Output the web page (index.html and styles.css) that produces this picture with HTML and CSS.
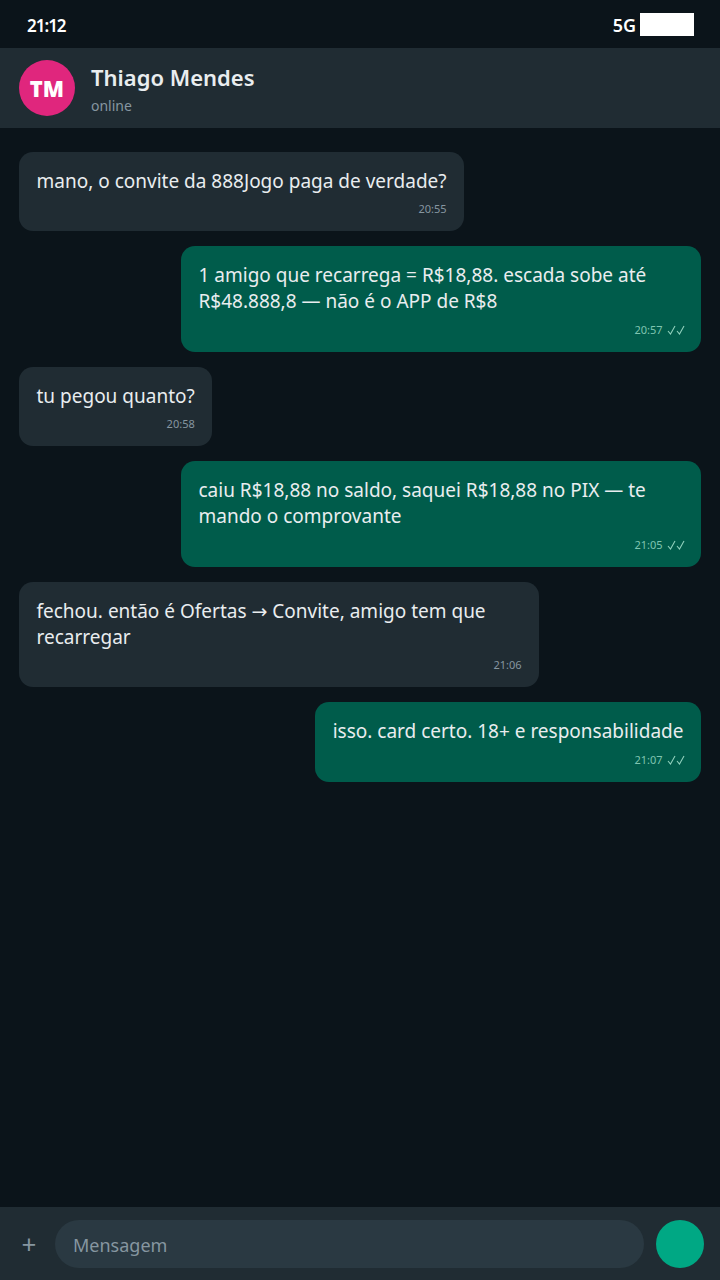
FILE: index.html
```html
<!DOCTYPE html>
<html lang="pt-BR">
<head>
    <meta charset="UTF-8">
    <meta name="viewport" content="width=device-width, initial-scale=1.0">
    <title>Thiago Mendes</title>
    <link rel="stylesheet" href="styles.css">
</head>
<body>
    <div class="phone">
        <div class="status-bar">
            <span class="clock">21:12</span>
            <div class="status-right">
                <span class="network">5G</span>
                <span class="battery"></span>
            </div>
        </div>

        <div class="chat-header">
            <div class="avatar">TM</div>
            <div class="contact">
                <div class="contact-name">Thiago Mendes</div>
                <div class="contact-status">online</div>
            </div>
        </div>

        <div class="messages">
            <div class="bubble in">
                <div class="bubble-text">mano, o convite da 888Jogo paga de verdade?</div>
                <div class="bubble-time">20:55</div>
            </div>
            <div class="bubble out">
                <div class="bubble-text">1 amigo que recarrega = R$18,88. escada sobe até R$48.888,8 — não é o APP de R$8</div>
                <div class="bubble-time">20:57
                    <svg class="ticks" viewBox="0 0 19 10"><path d="M1 6l2.5 3L8 1M10 6l2.5 3L17 1"/></svg>
                </div>
            </div>
            <div class="bubble in">
                <div class="bubble-text">tu pegou quanto?</div>
                <div class="bubble-time">20:58</div>
            </div>
            <div class="bubble out">
                <div class="bubble-text">caiu R$18,88 no saldo, saquei R$18,88 no PIX — te mando o comprovante</div>
                <div class="bubble-time">21:05
                    <svg class="ticks" viewBox="0 0 19 10"><path d="M1 6l2.5 3L8 1M10 6l2.5 3L17 1"/></svg>
                </div>
            </div>
            <div class="bubble in">
                <div class="bubble-text">fechou. então é Ofertas → Convite, amigo tem que recarregar</div>
                <div class="bubble-time">21:06</div>
            </div>
            <div class="bubble out">
                <div class="bubble-text">isso. card certo. 18+ e responsabilidade</div>
                <div class="bubble-time">21:07
                    <svg class="ticks" viewBox="0 0 19 10"><path d="M1 6l2.5 3L8 1M10 6l2.5 3L17 1"/></svg>
                </div>
            </div>
        </div>

        <div class="composer">
            <span class="plus">+</span>
            <div class="composer-input">Mensagem</div>
            <div class="send-button"></div>
        </div>
    </div>
</body>
</html>
```

FILE: styles.css
```css
* {
    box-sizing: border-box;
}

body {
    margin: 0;
    padding: 0;
    background-color: #0b141a;
    font-family: "Noto Sans", "DejaVu Sans", sans-serif;
}

.phone {
    display: flex;
    flex-direction: column;
    width: 720px;
    height: 1280px;
    background-color: #0b141a;
}

.status-bar {
    display: flex;
    justify-content: space-between;
    align-items: center;
    height: 48px;
    padding: 2px 26px 0 27px;
    color: #fff;
    font-size: 18px;
    font-weight: 600;
}

.clock {
    font-size: 17px;
    letter-spacing: -1px;
}

.status-right {
    display: flex;
    align-items: center;
    gap: 4px;
}

.battery {
    width: 54px;
    height: 23px;
    margin-top: -2px;
    background-color: #fff;
}

.chat-header {
    display: flex;
    align-items: center;
    gap: 16px;
    height: 80px;
    padding: 0 19px;
    background-color: #202c33;
}

.avatar {
    display: flex;
    justify-content: center;
    align-items: center;
    width: 56px;
    height: 56px;
    border-radius: 50%;
    background-color: #e0267d;
    color: #fff;
    font-size: 22px;
    font-weight: 900;
}

.contact {
    margin-top: 2px;
}

.contact-name {
    color: #e9edef;
    font-size: 22px;
    font-weight: 600;
    line-height: 30px;
}

.contact-status {
    margin-top: 4px;
    color: #8696a0;
    font-size: 14px;
    line-height: 20px;
}

.messages {
    display: flex;
    flex: 1;
    flex-direction: column;
    gap: 15px;
    padding: 23.8px 19px;
}

.bubble {
    max-width: 520px;
    padding: 16px 17.5px 13.2px;
    border-radius: 14px;
    color: #e9edef;
}

.bubble.in {
    align-self: flex-start;
    background-color: #202c33;
}

.bubble.out {
    align-self: flex-end;
    background-color: #005c4b;
}

.bubble-text {
    height: auto;
    font-size: 19px;
    line-height: 26.2px;
}

.bubble-time {
    display: flex;
    justify-content: flex-end;
    align-items: center;
    gap: 4px;
    margin-top: 6px;
    color: #8696a0;
    font-size: 11px;
    line-height: 18px;
}

.bubble.out .bubble-time {
    color: #7fc4b0;
}

.ticks {
    width: 19px;
    height: 10px;
    margin-right: -2px;
    fill: none;
    stroke: #8fd0bc;
    stroke-width: 1.1;
}

.composer {
    display: flex;
    align-items: center;
    gap: 12px;
    height: 73px;
    padding: 0 16px 0 17px;
    background-color: #202c33;
}

.plus {
    width: 24px;
    color: #8696a0;
    font-size: 26px;
    text-align: center;
}

.composer-input {
    flex: 1;
    height: 48px;
    margin-left: 2px;
    padding: 0 18px;
    border-radius: 24px;
    background-color: #2a3942;
    color: #8696a0;
    font-size: 18px;
    line-height: 50px;
}

.send-button {
    width: 48px;
    height: 48px;
    border-radius: 50%;
    background-color: #00a884;
}
```
